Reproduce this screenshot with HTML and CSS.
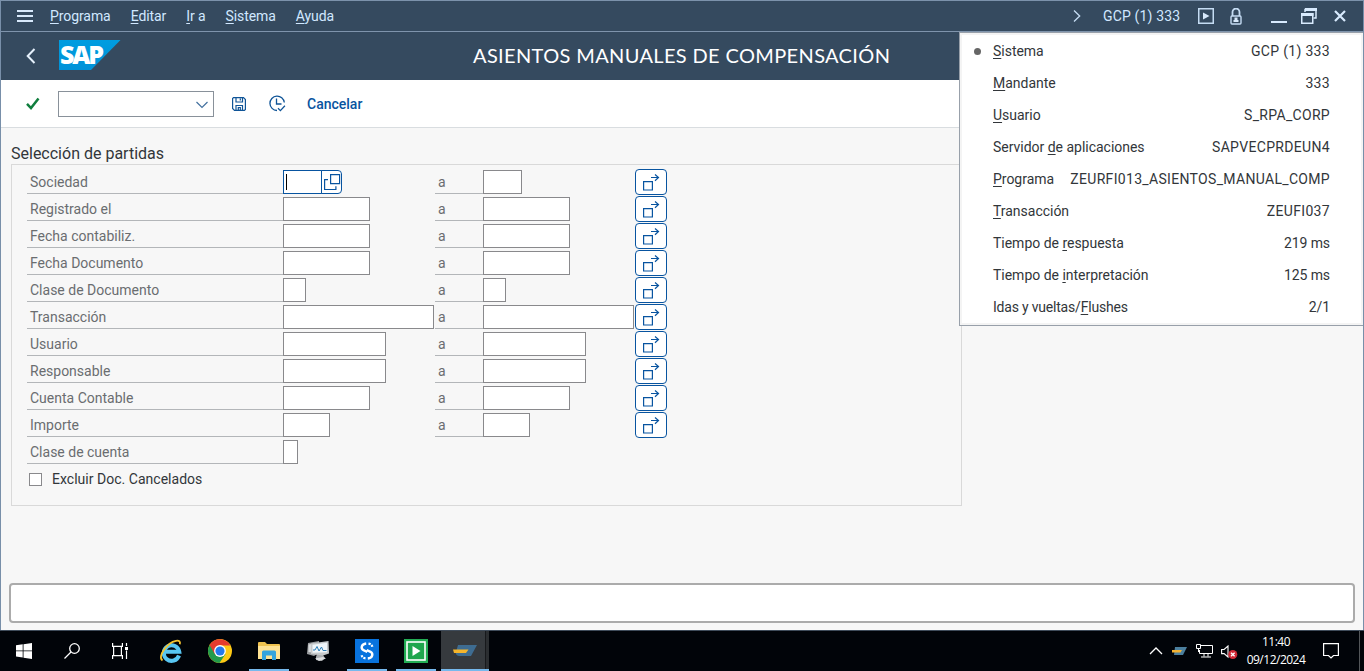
FILE: index.html
```
<!DOCTYPE html>
<html lang="es">
<head>
<meta charset="utf-8">
<title>Asientos manuales de compensación</title>
<link rel="stylesheet" href="styles.css">
</head>
<body>
<div class="window">
  <nav class="menubar">
    <svg class="burger" width="16" height="12" viewBox="0 0 16 12"><path d="M0 1h16M0 6h16M0 11h16" stroke="#d8e9fb" stroke-width="2"/></svg>
    <div class="menus">
      <span><u>P</u>rograma</span><span><u>E</u>ditar</span><span><u>I</u>r a</span><span><u>S</u>istema</span><span><u>A</u>yuda</span>
    </div>
    <div class="status">
      <svg class="more" width="8" height="12" viewBox="0 0 8 12"><path d="M1 .5l5.700 5.500L1 11.500" fill="none" stroke="#c5dcf3" stroke-width="1.300"/></svg>
      <span class="system">GCP (1) 333</span>
      <svg class="play" width="16" height="16" viewBox="0 0 16 16"><rect x=".75" y=".75" width="14.500" height="14.500" fill="none" stroke="#c5dcf3" stroke-width="1.500"/><path d="M5 4.500v7L11.500 8z" fill="#d8e9fb"/></svg>
      <svg class="lock" width="12" height="17" viewBox="0 0 12 17"><path d="M2.500 8V4a3.500 3.500 0 0 1 7 0v4" fill="none" stroke="#c5dcf3" stroke-width="1.800"/><rect x="1" y="8" width="10" height="8" rx="1" fill="none" stroke="#c5dcf3" stroke-width="1.400"/><path d="M4.500 9.500h3v2.500h1v2h-5v-2h1z" fill="#d8e9fb"/></svg>
      <svg class="min" width="16" height="16" viewBox="0 0 16 16"><path d="M0 14h16" stroke="#d8eafd" stroke-width="2"/></svg>
      <svg class="restore" width="16" height="16" viewBox="0 0 16 16"><path d="M4 4V1.500h11V10h-2.500" fill="none" stroke="#d8eafd" stroke-width="1.500"/><path d="M4 1.500h12" stroke="#d8eafd" stroke-width="3"/><rect x=".75" y="5.750" width="11" height="9.500" fill="none" stroke="#d8eafd" stroke-width="1.500"/><path d="M0 6.500h12.500" stroke="#d8eafd" stroke-width="3"/></svg>
      <svg class="close" width="12" height="12" viewBox="0 0 12 12"><path d="M1 1l10 10M11 1L1 11" stroke="#d8eafd" stroke-width="2.200"/></svg>
    </div>
  </nav>

  <header class="header">
    <svg class="back" width="10" height="16" viewBox="0 0 10 16"><path d="M8.500 1L1.700 8l6.800 7" fill="none" stroke="#e6f1fc" stroke-width="2"/></svg>
    <svg class="logo" width="62" height="30" viewBox="0 0 62 30">
      <defs><linearGradient id="sapblue" x1="0" y1="0" x2="0" y2="1"><stop offset="0" stop-color="#009de0"/><stop offset="1" stop-color="#0092d8"/></linearGradient></defs>
      <path d="M0 0h61.500L32 30H0z" fill="url(#sapblue)"/>
      <text class="logo-text" x="1" y="23.500" textLength="44" lengthAdjust="spacing">SAP</text>
    </svg>
    <h1>ASIENTOS MANUALES DE COMPENSACIÓN</h1>
  </header>

  <div class="toolbar">
    <svg class="ok" width="14" height="13" viewBox="0 0 14 13"><path d="M1 6.800l4 4.200L12.500 1.500" fill="none" stroke="#107e3e" stroke-width="2.500"/></svg>
    <div class="combo"><svg width="12" height="8" viewBox="0 0 12 8"><path d="M.5 1L6 6.500 11.500 1" fill="none" stroke="#43719f" stroke-width="1.200"/></svg></div>
    <svg class="save" width="14" height="14" viewBox="0 0 14 14" fill="none" stroke="#0f5497" stroke-width="1.200"><path d="M1.500.6h10l1.900 1.900v9.900l-1 1H2.500L.6 11.500V1.500zM4 .6v4.400h6.500V.6M8.300 1.500v2M4 13.400V8.500h6.500v4.900M6.300 10.500h2v2.900h-2z"/></svg>
    <svg class="clock" width="17" height="17" viewBox="0 0 17 17" fill="none" stroke="#0f5497" stroke-width="1.300"><path d="M15.300 7.500A7.200 7.200 0 1 0 8 15.500M7.500 3.500V9h5M9 13.200l2.400 2.400 4.500-4.800"/></svg>
    <span class="cancel">Cancelar</span>
  </div>

  <main class="content">
    <h2>Selección de partidas</h2>
    <section class="group" id="group"></section>
  </main>
  <div class="message"></div>

  <ul class="popup">
    <li class="current"><span><u>S</u>istema</span><b>GCP (1) 333</b></li>
    <li><span><u>M</u>andante</span><b>333</b></li>
    <li><span><u>U</u>suario</span><b>S_RPA_CORP</b></li>
    <li><span>Servidor <u>d</u>e aplicaciones</span><b>SAPVECPRDEUN4</b></li>
    <li><span><u>P</u>rograma</span><b>ZEURFI013_ASIENTOS_MANUAL_COMP</b></li>
    <li><span><u>T</u>ransacción</span><b>ZEUFI037</b></li>
    <li><span>Tiempo de <u>r</u>espuesta</span><b class="ms">219 ms</b></li>
    <li><span>Tiempo de <u>i</u>nterpretación</span><b class="ms">125 ms</b></li>
    <li><span class="tight">Idas y vueltas/<u>F</u>lushes</span><b class="ms">2/1</b></li>
  </ul>
</div>

<footer class="taskbar">
  <div class="sys"><svg width="16" height="16" viewBox="0 0 16 16" fill="#fff"><path d="M0 2.200l6.700-.9v6.200H0zM7.500 1.200L16 0v7.500H7.500zM0 8.300h6.700v6.200L0 13.600zM7.500 8.300H16V16l-8.500-1.200z"/></svg></div>
  <div class="sys"><svg width="16" height="16" viewBox="0 0 16 16" fill="none" stroke="#fff" stroke-width="1.300"><circle cx="10.500" cy="5.500" r="4.800"/><path d="M7 9L.5 15.500"/></svg></div>
  <div class="sys"><svg width="16" height="16" viewBox="0 0 16 16" fill="none" stroke="#fff" stroke-width="1.200"><path d="M.6 0v3.400h9.800V0M.6 16v-3.400h9.800V16M1.600 3.400v9.200M9.400 3.400v9.200M14.500 0v3M14.500 7.500V16"/><path d="M13 4h3v3h-3z" fill="#fff" stroke="none"/></svg></div>
  <div class="apps">
    <div class="app"><svg width="24" height="24" viewBox="0 0 24 24"><path d="M20 16.500A7.800 7.800 0 1 1 20.300 12.800H6.500" fill="none" stroke="#58c6f2" stroke-width="4"/><path d="M3.500 21.500C-2 18 8 3.500 17 1.800c3.500-.6 4.500 1 3.800 3.500" fill="none" stroke="#f3c22f" stroke-width="1.800"/></svg></div>
    <div class="app"><svg width="24" height="24" viewBox="0 0 24 24"><circle cx="12" cy="12" r="12" fill="#fdc915"/><path d="M12 12L1.600 6A12 12 0 0 0 11.500 24l6-9z" fill="#229b4b"/><path d="M1.600 6a12 12 0 0 1 20.800 0.500H12l-5.300 8.500z" fill="#e53b2e"/><circle cx="12" cy="12" r="5.900" fill="#fff"/><circle cx="12" cy="12" r="4.600" fill="#2479ec"/></svg></div>
    <div class="app open"><svg width="22" height="20" viewBox="0 0 22 20"><path d="M0 2q0-1 1-1h6l2 2h12q1 0 1 1v14H0z" fill="#efc350"/><path d="M0 5h22v13H0z" fill="#ffe394"/><path d="M4 19v-8q0-1.500 1.500-1.500h11Q18 9.500 18 11v8h-4v-4.500H8V19z" fill="#35a4dd"/></svg></div>
    <div class="app"><svg width="24" height="22" viewBox="0 0 24 22"><path d="M2 3l11-2v12l-5 3-7-2z" fill="#9b9ea1"/><path d="M2.500 4.500L8 3.500v9l-5.500-.5z" fill="#d8dbdd"/><path d="M11 14l6 1 2 3-3 3-6-1v-3z" fill="#a9acaf"/><path d="M5 3.500L22.500 1l.5 12.500-6 2L5 14z" fill="#c6c9cb"/><path d="M6.500 4.800L21 2.800v9.400l-14.500 0.500z" fill="#f0f6fa"/><path d="M7 10h2l2-3.500 2 4.500 2.500-4 1.500 3.500h3.500" fill="none" stroke="#2d7fb8" stroke-width="1"/><path d="M9 18.500l8-1.500 3 1.500-7 2.500z" fill="#dcdee0"/></svg></div>
    <div class="app open"><svg width="24" height="24" viewBox="0 0 24 24"><path d="M0 0h24v24H0z" fill="#0873de"/><path d="M11.200 4.500C6.200 5 5.500 9.500 8.500 11.200L12.300 13M12.800 19.500c5-.5 5.700-5 2.700-6.700L11.700 11" fill="none" stroke="#fff" stroke-width="2.400"/><path d="M13.500 4.600c2.200.3 3.600 1.400 4 3.700M10.500 19.400c-2.200-.3-3.600-1.400-4-3.700" fill="none" stroke="#fff" stroke-width="2.200" stroke-dasharray="2.200 1"/></svg></div>
    <div class="app open"><svg width="24" height="24" viewBox="0 0 24 24"><path d="M0 0h24v24H0z" fill="#22ad54"/><rect x="3" y="3" width="18" height="18" fill="#1fa64d" stroke="#fff" stroke-width="1.600"/><path d="M8.500 7v10l8-5z" fill="#fff"/></svg></div>
    <div class="app open active"><svg width="24" height="12" viewBox="0 0 24 12"><path d="M5 0h19l-6 11H6q-4-1-3-4z" fill="#3e6c91"/><path d="M0 4.500h15.500l-2.500 3.500H1z" fill="#f5b52b"/></svg></div>
  </div>
  <div class="tray">
    <svg class="up" width="14" height="8" viewBox="0 0 14 8"><path d="M1 7l6-6 6 6" fill="none" stroke="#fff" stroke-width="1.300"/></svg>
    <svg class="mini" width="15" height="8" viewBox="0 0 15 8"><path d="M3 0h12l-4 8H2z" fill="#4b7f9e"/><path d="M0 3h10L8.500 5.500H0z" fill="#f2b233"/></svg>
    <svg class="net" width="17" height="14" viewBox="0 0 17 14" fill="none" stroke="#fff"><path d="M5 1.500h11.500v8H3.500V6M8 9.500v3M12 9.500v3M5 13h10M.5.500h4v4h-4zM2.500 4.500V8"/></svg>
    <svg class="vol" width="17" height="15" viewBox="0 0 17 15"><path d="M.6 4.500h2.500L7 1v11L3.100 8.600H.6z" fill="none" stroke="#fff" stroke-width="1.100"/><circle cx="11.800" cy="9.500" r="4.500" fill="#d02a37"/><path d="M10 7.700l3.600 3.600M13.600 7.700L10 11.300" stroke="#fff" stroke-width="1.300"/></svg>
    <div class="time"><span>11:40</span><span>09/12/2024</span></div>
    <svg class="note" width="16" height="16" viewBox="0 0 16 16"><path d="M.6.6h14.800v11.900H10.500L8 15l-2.500-2.500H.6z" fill="none" stroke="#fff" stroke-width="1.200"/></svg>
    <div class="edge"></div>
  </div>
</footer>
<script src="form.js"></script>
</body>
</html>
```

FILE: styles.css
```
* { box-sizing: border-box; }
body {
  margin: 0;
  width: 1364px;
  height: 671px;
  overflow: hidden;
  font: 14px/20px Roboto, "Liberation Sans", sans-serif;
  color: #32363a;
  background: #000;
}
svg { display: block; flex: none; }
u { text-underline-offset: 2px; text-decoration-thickness: 1px; text-decoration-skip-ink: none; }
.window {
  position: relative;
  display: flex;
  flex-direction: column;
  height: 630px;
  background: #f7f7f7;
  border: 1px solid #788fa9;
  border-top-color: #7c92ab;
  border-bottom: 0;
}
.menubar {
  display: flex;
  align-items: center;
  height: 31px;
  padding: 0 17px 0 16px;
  background: #354a5f;
  border-bottom: 1px solid #7f94ac;
  color: #d1e8ff;
}
.menus { display: flex; gap: 20px; margin-left: 17px; padding-bottom: 1px; letter-spacing: -.08px; }
.menus span { white-space: nowrap; }
.status { display: flex; align-items: center; margin-left: auto; }
.system { width: 77px; margin: 0 18px 0 22px; white-space: nowrap; letter-spacing: .15px; }
.lock { margin: 0 29px 0 16px; }
.restore { margin: 0 17px 0 14px; }
.header {
  display: flex;
  align-items: center;
  height: 48px;
  padding-left: 25px;
  background: #354a5f;
}
.logo { margin-left: 23px; margin-top: -2px; overflow: visible; }
.logo-text { font: 800 25px "Open Sans", sans-serif; fill: #fff; }
.header h1 {
  margin: -2px 0 0 352px;
  font: 400 20px/24px Lato, sans-serif;
  letter-spacing: .36px;
  color: #fff;
  white-space: nowrap;
}
.toolbar {
  display: flex;
  align-items: center;
  height: 48px;
  padding-left: 25px;
  background: #fff;
  border-bottom: 1px solid #d9dde0;
}
.ok { margin-top: -1px; }
.combo {
  display: flex;
  align-items: center;
  justify-content: flex-end;
  width: 156px;
  height: 26px;
  padding: 2px 5px 0 0;
  margin: 1px 18px 0 18px;
  border: 1px solid #89919a;
}
.clock { margin: 0 21px 0 23px; }
.cancel { color: #0854a0; font-weight: 500; }
.content { flex: 1; padding: 14px 0 0 10px; }
.content h2 {
  margin: 0;
  padding-top: 1px;
  font: 400 16px/21px Roboto, sans-serif;
}
.group {
  width: 951px;
  height: 342px;
  padding: 4px 0 0 15px;
  border: 1px solid #d9d9d9;
}
.row {
  display: grid;
  grid-template-columns: 256px 152px 48px 152px 32px;
  height: 27px;
}
.label {
  height: 25px;
  padding: 3px 0 0 3px;
  border-bottom: 1px solid #b3b6b9;
  color: #6a6d70;
  white-space: nowrap;
}
.cell { display: flex; padding-top: 1px; }
.field { height: 24px; background: #fff; border: 1px solid #89898c; }
.field.focus { border-color: #0854a0; padding: 3px 0 0 2px; }
.caret { width: 1px; height: 16px; background: #000; }
.help {
  display: flex;
  width: 21px;
  height: 24px;
  margin-left: -1px;
  padding: 3px 0 0 2px;
  background: #fff;
  border: 1px solid #0854a0;
  border-radius: 0 4px 4px 0;
}
.multi {
  display: flex;
  width: 32px;
  height: 26px;
  padding: 4px 0 0 7px;
  background: #fff;
  border: 1px solid #0854a0;
  border-radius: 4px;
}
.check { display: flex; align-items: center; height: 26px; padding-left: 2px; gap: 10px; letter-spacing: .02px; }
.box { width: 13px; height: 13px; background: #fff; border: 1px solid #89898c; }
.message {
  height: 40px;
  margin: 0 8px 7px;
  background: #fff;
  border: 2px solid #ababab;
  border-radius: 4px;
}
.popup {
  position: absolute;
  left: 958px;
  top: 31px;
  width: 404px;
  height: 294px;
  margin: 0;
  padding: 2px 33px 0 33px;
  list-style: none;
  background: #fff;
  border: 1px solid #98a0aa;
  border-right: 0;
  box-shadow: inset 0 0 0 2px #f4f4f4;
}
.popup li {
  display: flex;
  align-items: center;
  justify-content: space-between;
  height: 32px;
  letter-spacing: -.02px;
  white-space: nowrap;
}
.popup .tight { letter-spacing: -.2px; }
.popup b { font-weight: 400; letter-spacing: .32px; }
.popup .ms { letter-spacing: -.1px; }
.current::before {
  content: "";
  width: 7px;
  height: 7px;
  margin: 0 12px 0 -19px;
  border-radius: 50%;
  background: #666;
}
.current span { margin-right: auto; }
.taskbar { display: flex; height: 41px; border-top: 1px solid #3f4c5b; background: #010409; }
.sys { display: flex; align-items: center; justify-content: center; width: 48px; }
.apps { display: flex; margin-left: 2px; }
.app { display: flex; flex-direction: column; align-items: center; justify-content: center; width: 49px; }
.app.open { border-bottom: 2px solid #76b9ed; width: 40px; margin: 0 4px 0 5px; padding-top: 2px; }
.app.active { width: 48px; margin: 0 0 0 1px; background: linear-gradient(90deg, #363a3e 44px, #17191c 44px, #17191c 45px, #2b2e31 45px); }
.tray { display: flex; align-items: center; margin-left: auto; }
.up { margin-right: 4px; }
.mini { margin: 0 9px 0 5px; }
.net { margin-right: 8px; }
.vol { margin-top: 2px; }
.time {
  display: flex;
  flex-direction: column;
  width: 60px;
  margin: 0 17px 0 8px;
  font: 12px/18px "Open Sans", sans-serif;
  letter-spacing: -.5px;
  text-align: center;
  color: #fff;
}
.edge { width: 1px; height: 40px; margin: 0 4px 0 20px; background: #535659; }
```

FILE: form.js
```
const rows = [
  ["Sociedad", 39],
  ["Registrado el", 87],
  ["Fecha contabiliz.", 87],
  ["Fecha Documento", 87],
  ["Clase de Documento", 23],
  ["Transacción", 151],
  ["Usuario", 103],
  ["Responsable", 103],
  ["Cuenta Contable", 87],
  ["Importe", 47],
  ["Clase de cuenta", 15]
];
const multi = '<div class="multi"><svg width="17" height="17" viewBox="0 0 17 17" fill="none" stroke="#0854a0" stroke-width="1.200"><path d="M.6 7.600h8.800v8.400H.6zM8 3.500h7.500M12 .5l3.500 3L12 6.700"/></svg></div>';
const help = '<div class="help"><svg width="17" height="17" viewBox="0 0 17 17" fill="none" stroke="#0854a0" stroke-width="1.200"><path d="M6.600.6h9v9h-9zM4 5.600H.6v9.900h11.300v-3.300"/></svg></div>';
document.getElementById("group").innerHTML = rows.map(([label, width], i) => {
  const first = i === 0;
  const range = i < rows.length - 1;
  return `<div class="row"><div class="label">${label}</div>
    <div class="cell"><div class="field${first ? " focus" : ""}" style="width:${width}px">${first ? '<div class="caret"></div>' : ""}</div>${first ? help : ""}</div>
    ${range ? `<div class="label">a</div><div class="cell"><div class="field" style="width:${width}px"></div></div>${multi}` : ""}</div>`;
}).join("") + '<div class="check"><div class="box"></div>Excluir Doc. Cancelados</div>';
```
